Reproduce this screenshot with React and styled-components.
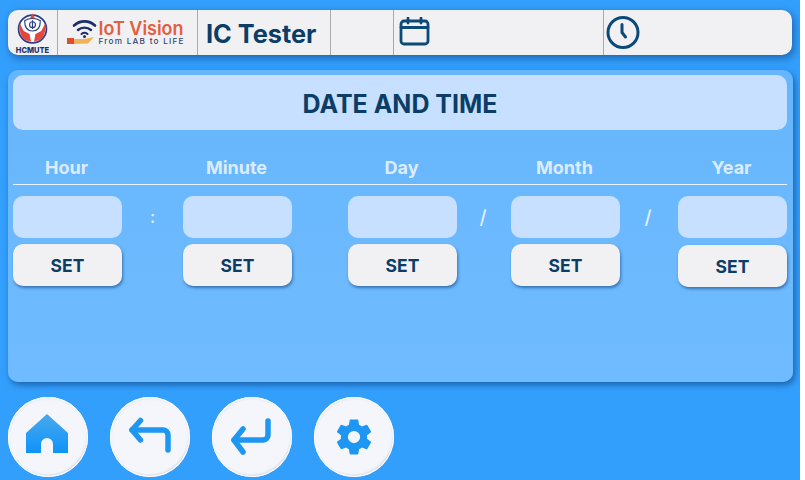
import React from 'react'
import styled, { createGlobalStyle } from 'styled-components'

const GlobalStyle = createGlobalStyle`
  html, body {
    margin: 0;
    padding: 0;
    background: #fff;
  }
  * {
    box-sizing: border-box;
  }
`

const Screen = styled.div`
  width: 800px;
  height: 480px;
  overflow: hidden;
  padding: 10px 8px 0;
  display: flex;
  flex-direction: column;
  background: #339ffc;
  font-family: Inter, "Liberation Sans", sans-serif;
`

const TopBar = styled.header`
  height: 45px;
  flex: none;
  display: grid;
  grid-template-columns: 50px 140px 133px 63px 210px 1fr;
  background: #f1f1f4;
  border-radius: 10px;
  box-shadow: 2px 3px 8px rgba(10, 60, 120, 0.6);
  overflow: hidden;
`

const Cell = styled.div`
  display: flex;
  align-items: center;
  padding-left: ${({ $pad }) => $pad || 0}px;
  border-right: ${({ $last }) => ($last ? 'none' : '1px solid #a9a9ab')};
  min-width: 0;
`

const Title = styled.div`
  padding-top: 2px;
  font-size: 25.3px;
  font-weight: 700;
  color: #0b3d66;
`

const Panel = styled.main`
  margin-top: 15px;
  width: 785px;
  height: 312px;
  flex: none;
  padding: 5px 6px 5px 5px;
  background: linear-gradient(#66b6fd 0, #70bbff 100%);
  border-radius: 10px;
  box-shadow: 2px 3px 6px rgba(10, 60, 120, 0.6);
`

const Heading = styled.h1`
  margin: 0;
  height: 55px;
  padding-top: 2px;
  display: flex;
  align-items: center;
  justify-content: center;
  background: #c7e0ff;
  border-radius: 10px;
  font-size: 25px;
  font-weight: 700;
  color: #0b3d66;
`

const Labels = styled.div`
  margin-top: 25px;
  height: 30px;
  display: grid;
  grid-template-columns: 109px 61px 109px 56px 109px 54px 109px 58px 109px;
  border-bottom: 1px solid #eaf4ff;
`

const Label = styled.div`
  grid-column: ${({ $col }) => $col};
  padding-right: 2px;
  text-align: center;
  font-size: 18px;
  font-weight: 700;
  line-height: 26px;
  color: #dcecff;
`

const Fields = styled.div`
  margin-top: 11px;
  display: grid;
  grid-template-columns: 109px 61px 109px 56px 109px 54px 109px 58px 109px;
`

const Column = styled.div`
  grid-column: ${({ $col }) => $col};
  display: flex;
  flex-direction: column;
  gap: ${({ $gap }) => $gap}px;
`

const Input = styled.div`
  height: 42px;
  background: #c7e0ff;
  border-radius: 10px;
`

const SetButton = styled.button`
  height: 42px;
  padding: 0;
  border: none;
  background: #f1f1f4;
  border-radius: 10px;
  box-shadow: 1px 2px 3px rgba(10, 60, 120, 0.55);
  font-family: inherit;
  font-size: 17.5px;
  font-weight: 700;
  color: #0b3d66;
`

const Separator = styled.div`
  grid-column: ${({ $col }) => $col};
  grid-row: 1;
  height: 42px;
  padding-right: ${({ $shift }) => $shift || 0}px;
  display: flex;
  align-items: center;
  justify-content: center;
  font-size: ${({ $size }) => $size}px;
  font-weight: 500;
  color: #e3f0ff;
`

const Footer = styled.footer`
  margin-top: 15px;
  display: flex;
  gap: 22px;
`

const RoundButton = styled.button`
  width: 80px;
  height: 80px;
  padding: 0;
  flex: none;
  display: flex;
  align-items: center;
  justify-content: center;
  border: none;
  border-radius: 50%;
  background: #f4f6fc;
  box-shadow: inset 0 0 0 1px #fff, inset -1px -2px 2px #d5dbe6, inset 1px 2px 2px #e6e9f0;
`

const LogoBadge = () => (
  <svg width="50" height="45" viewBox="0 0 50 45">
    <circle cx="25" cy="19" r="14.200" fill="#fff" stroke="#2c3f83" strokeWidth="1.800" />
    <path d="M12 13l4 8 6 3 1.500 8L17 30c-4.500-4-6-10.500-5-17z" fill="#e4473d" />
    <path d="M38 13l-4 8-6 3-1.500 8 6.500-2c4.500-4 6-10.500 5-17z" fill="#e4473d" />
    <path d="M17 10.500c0 6 2.500 10.500 8 10.500s8-4.500 8-10.500c-2.500-2-5-2.500-8-2.500s-5.500.5-8 2.500z" fill="#fff" stroke="#2c3f83" strokeWidth="1.200" />
    <circle cx="25" cy="14.500" r="3" fill="none" stroke="#2c3f83" strokeWidth="1.200" />
    <path d="M25 10v9" stroke="#2c3f83" strokeWidth="1.200" />
    <path d="M25 3l2.500 5h-5z" fill="#e4473d" />
    <text x="25" y="43" textAnchor="middle" fontSize="8.400" fontWeight="800" fill="#1e3468" fontFamily="Inter, sans-serif" textLength="34" lengthAdjust="spacingAndGlyphs">HCMUTE</text>
  </svg>
)

const LogoVision = () => (
  <svg width="138" height="45" viewBox="0 0 138 45">
    <path d="M16 15.500c6-5.500 15-5.500 21 0" fill="none" stroke="#1c2f6b" strokeWidth="2.600" strokeLinecap="round" />
    <path d="M20 20c3.600-3.200 9.400-3.200 13 0" fill="none" stroke="#1c2f6b" strokeWidth="2.400" strokeLinecap="round" />
    <path d="M23.500 24c1.700-1.400 4.300-1.400 6 0" fill="none" stroke="#1c2f6b" strokeWidth="2" strokeLinecap="round" />
    <circle cx="26.500" cy="26.500" r="1.500" fill="#1c2f6b" />
    <rect x="9" y="28" width="7" height="6" fill="#d9502e" />
    <path d="M16 29h10l10-2-6 6.500-14 .5z" fill="#efb45b" />
    <text x="40.500" y="25" fontSize="19" fontWeight="600" fill="#e3603d" fontFamily="Inter, sans-serif" textLength="85" lengthAdjust="spacingAndGlyphs">IoT Vision</text>
    <text x="40.500" y="34" fontSize="8.200" fontWeight="500" fill="#33476f" fontFamily="Inter, sans-serif" textLength="85">From LAB to LIFE</text>
  </svg>
)

const CalendarIcon = () => (
  <svg width="32" height="32" viewBox="0 2 32 32" fill="none" stroke="#0b4a78" strokeWidth="2.800" strokeLinecap="round" strokeLinejoin="round">
    <rect x="3" y="6" width="27" height="23" rx="3" />
    <path d="M3 12.500h27M10 3v5M23 3v5" />
  </svg>
)

const ClockIcon = () => (
  <svg width="36" height="36" viewBox="0 0 36 36" fill="none" stroke="#0b4a78" strokeWidth="3" strokeLinecap="round" strokeLinejoin="round">
    <circle cx="18" cy="17.500" r="15" />
    <path d="M17 9.500v8l3.500 4.500" />
  </svg>
)

const HomeIcon = () => (
  <svg width="44" height="46" viewBox="0 0 44 46">
    <defs>
      <linearGradient id="homeFill" x1="0" y1="0" x2="0" y2="1">
        <stop offset="0" stopColor="#4aa9ec" />
        <stop offset="1" stopColor="#0d93fb" />
      </linearGradient>
    </defs>
    <path d="M21 0L42 19V39H27V30a6 6 0 0 0-12 0V39H0V19Z" fill="url(#homeFill)" />
  </svg>
)

const BackIcon = () => (
  <svg width="44" height="40" viewBox="0 0 44 40" fill="none" stroke="#1d97f2" strokeWidth="5.500" strokeLinecap="round" strokeLinejoin="round">
    <path d="M40 33V18a5 5 0 0 0-5-5H4" />
    <path d="M12.500 3.500L4 13l8.500 10" />
  </svg>
)

const EnterIcon = () => (
  <svg width="44" height="40" viewBox="0 0 44 40" fill="none" stroke="#1d97f2" strokeWidth="5.500" strokeLinecap="round" strokeLinejoin="round">
    <path d="M38 4V18a5 5 0 0 1-5 5H4" />
    <path d="M13 12L4 23l9 12" />
  </svg>
)

const GearIcon = () => (
  <svg width="42" height="42" viewBox="0 0 24 24">
    <path
      fill="#1d97f2"
      d="M19.430 12.980c.04-.32.070-.640.070-.980s-.030-.660-.070-.980l2.110-1.650a.5.5 0 0 0 .120-.640l-2-3.460a.5.5 0 0 0-.610-.220l-2.490 1a7.300 7.300 0 0 0-1.690-.980l-.380-2.650A.49.490 0 0 0 14 2h-4a.49.490 0 0 0-.490.420l-.380 2.650c-.610.250-1.170.590-1.690.980l-2.490-1a.5.5 0 0 0-.610.220l-2 3.460a.49.490 0 0 0 .120.640l2.110 1.650c-.040.320-.070.650-.070.980s.030.660.070.980l-2.110 1.650a.5.5 0 0 0-.120.640l2 3.460c.120.220.390.300.610.220l2.490-1c.520.400 1.080.730 1.690.980l.380 2.650c.030.240.240.420.490.420h4c.250 0 .460-.180.490-.420l.380-2.650c.610-.250 1.170-.590 1.690-.980l2.490 1c.230.090.490 0 .610-.220l2-3.460a.5.5 0 0 0-.120-.640zM12 15.500a3.500 3.500 0 1 1 0-7 3.500 3.500 0 0 1 0 7z"
    />
  </svg>
)

const fields = [
  { label: 'Hour', col: 1, gap: 6 },
  { label: 'Minute', col: 3, gap: 6 },
  { label: 'Day', col: 5, gap: 6 },
  { label: 'Month', col: 7, gap: 6 },
  { label: 'Year', col: 9, gap: 7 },
]

const separators = [
  { col: 2, text: ':', size: 17 },
  { col: 6, text: '/', size: 19, shift: 2 },
  { col: 8, text: '/', size: 19, shift: 2 },
]

export default function App() {
  return (
    <>
      <GlobalStyle />
      <Screen>
        <TopBar>
          <Cell><LogoBadge /></Cell>
          <Cell><LogoVision /></Cell>
          <Cell $pad={8}><Title>IC Tester</Title></Cell>
          <Cell />
          <Cell $pad={4}><CalendarIcon /></Cell>
          <Cell $last $pad={1}><ClockIcon /></Cell>
        </TopBar>
        <Panel>
          <Heading>DATE AND TIME</Heading>
          <Labels>
            {fields.map((f) => (
              <Label key={f.label} $col={f.col}>{f.label}</Label>
            ))}
          </Labels>
          <Fields>
            {fields.map((f) => (
              <Column key={f.label} $col={f.col} $gap={f.gap}>
                <Input />
                <SetButton>SET</SetButton>
              </Column>
            ))}
            {separators.map((s) => (
              <Separator key={s.col} $col={s.col} $size={s.size} $shift={s.shift}>{s.text}</Separator>
            ))}
          </Fields>
        </Panel>
        <Footer>
          <RoundButton><HomeIcon /></RoundButton>
          <RoundButton><BackIcon /></RoundButton>
          <RoundButton><EnterIcon /></RoundButton>
          <RoundButton><GearIcon /></RoundButton>
        </Footer>
      </Screen>
    </>
  )
}
